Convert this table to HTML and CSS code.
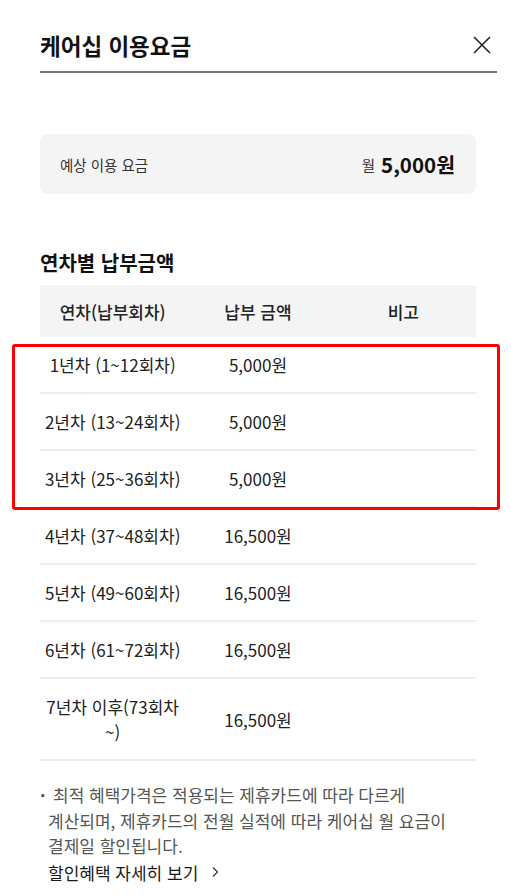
FILE: index.html
```html
<!DOCTYPE html>
<html lang="ko">
<head>
<meta charset="utf-8">
<link rel="stylesheet" href="styles.css">
</head>
<body>
<div class="sheet">
  <header class="head">
    <h1 class="title">케어십 이용요금</h1>
    <button class="close" aria-label="닫기">
      <svg width="20" height="20" viewBox="0 0 20 20"><path d="M2 2 L18 18 M18 2 L2 18" stroke="#222" stroke-width="1.6" fill="none"/></svg>
    </button>
  </header>

  <div class="summary">
    <span class="summary-label">예상 이용 요금</span>
    <span class="summary-value"><span class="per">월</span> <strong>5,000원</strong></span>
  </div>

  <h2 class="section-title">연차별 납부금액</h2>

  <div class="table-wrap">
    <table class="fee">
      <thead>
        <tr><th>연차(납부회차)</th><th>납부 금액</th><th>비고</th></tr>
      </thead>
      <tbody>
        <tr><td>1년차 (1~12회차)</td><td>5,000원</td><td></td></tr>
        <tr><td>2년차 (13~24회차)</td><td>5,000원</td><td></td></tr>
        <tr><td>3년차 (25~36회차)</td><td>5,000원</td><td></td></tr>
        <tr><td>4년차 (37~48회차)</td><td>16,500원</td><td></td></tr>
        <tr><td>5년차 (49~60회차)</td><td>16,500원</td><td></td></tr>
        <tr><td>6년차 (61~72회차)</td><td>16,500원</td><td></td></tr>
        <tr><td>7년차 이후(73회차 ~)</td><td>16,500원</td><td></td></tr>
      </tbody>
    </table>
    <div class="highlight"></div>
  </div>

  <ul class="notes">
    <li><span class="dot">·</span>최적 혜택가격은 적용되는 제휴카드에 따라 다르게 계산되며, 제휴카드의 전월 실적에 따라 케어십 월 요금이 결제일 할인됩니다.</li>
  </ul>
  <a class="more" href="#">할인혜택 자세히 보기
    <svg width="10" height="12" viewBox="0 0 10 12"><path d="M3 1.5 L7.5 6 L3 10.5" stroke="#333" stroke-width="1.2" fill="none"/></svg>
  </a>
</div>
</body>
</html>
```

FILE: styles.css
```css
* { box-sizing: border-box; }
html, body { margin: 0; padding: 0; background: #fff; }
body {
  font-family: "Noto Sans CJK KR", "Noto Sans", sans-serif;
  color: #222;
}
.sheet {
  padding: 0 35px 0 40px;
}
.head {
  display: flex;
  align-items: center;
  justify-content: space-between;
  margin-right: -21px;
  padding-top: 30px;
  padding-bottom: 11px;
  border-bottom: 2px solid #777;
}
.title {
  margin: 0;
  font-size: 22.5px;
  line-height: 30px;
  font-weight: 700;
  color: #111;
}
.close {
  border: 0;
  background: none;
  padding: 0;
  margin-right: 5px;
  width: 20px;
  height: 20px;
  display: flex;
}
.summary {
  margin-top: 61px;
  height: 60px;
  background: #f4f4f4;
  border-radius: 8px;
  display: flex;
  align-items: center;
  justify-content: space-between;
  padding: 0 21px 0 20px;
}
.summary-label {
  font-size: 14.5px;
  color: #333;
}
.summary-value {
  display: flex;
  align-items: center;
  gap: 6px;
}
.per { font-size: 14.5px; color: #333; }
.summary-value strong {
  font-size: 20.5px;
  font-weight: 700;
  color: #111;
}
.section-title {
  margin: 55px 0 8px;
  font-size: 20px;
  line-height: 28px;
  font-weight: 700;
  color: #111;
}
.table-wrap { position: relative; }
.fee {
  width: 100%;
  border-collapse: collapse;
  table-layout: fixed;
  font-size: 17px;
}
.fee th {
  background: #f4f4f4;
  height: 52px;
  font-weight: 500;
  color: #222;
  padding: 0;
}
.fee td {
  text-align: center;
  padding: 15px 4px;
  line-height: 25px;
  border-bottom: 2px solid #eee;
  color: #222;
}
.fee td:first-child { padding: 15px 2px; }
.highlight {
  position: absolute;
  left: -28px;
  right: -24px;
  top: 59px;
  height: 166px;
  border: 3px solid #f00;
  border-radius: 3px;
  pointer-events: none;
}
.notes {
  list-style: none;
  margin: 21px 0 0;
  padding: 0 10px 0 8px;
  font-size: 17px;
  line-height: 25.5px;
  color: #555;
  word-break: keep-all;
}
.notes li { text-indent: -8px; }
.dot {
  display: inline-block;
  width: 13px;
  text-indent: 0;
  font-weight: 700;
}
.more {
  display: inline-flex;
  align-items: center;
  gap: 12px;
  margin: 1px 0 0 8px;
  font-size: 17px;
  line-height: 25px;
  font-weight: 400;
  color: #1a1a1a;
  text-decoration: none;
}
```
